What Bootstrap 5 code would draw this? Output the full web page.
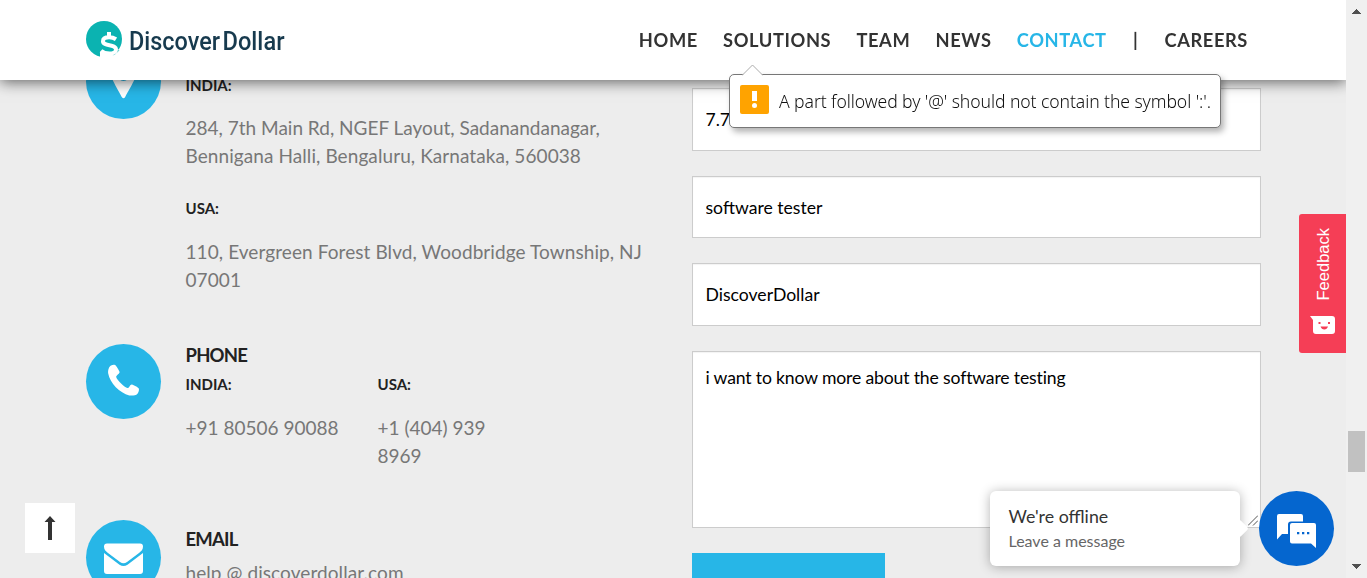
<!DOCTYPE html>
<html lang="en">
<head>
<meta charset="utf-8">
<title>Discover Dollar - Contact</title>
<meta name="viewport" content="width=device-width, initial-scale=1">
<link href="https://cdn.jsdelivr.net/npm/bootstrap@5.3.0/dist/css/bootstrap.min.css" rel="stylesheet">
<style>
body{font-family:Lato,"Liberation Sans",sans-serif;background:#ededed;color:#777;font-size:19px;line-height:28px}
.page{width:1346px}
.topbar{width:1346px;height:80px;padding:0 98px 0 86px;box-shadow:0 2px 14px rgba(0,0,0,.6);clip-path:inset(0 0 -30px 0)}
.menu{gap:25.200px}
.menu a{color:#333;font-weight:700;font-size:18.3px;letter-spacing:.6px;text-decoration:none;white-space:nowrap}
.menu a.active{color:#27b6e7}
.menu a.divider{margin:0 1px}
.contact{padding:44px 85px 0 86px}
.info{width:606px}
.info-text{margin-left:24.500px}
.disc{width:75px;height:75px;background:#27b6e7}
.info h4{color:#222;font-size:18.5px;font-weight:700;line-height:30px;letter-spacing:-.8px;margin:0}
.info h6{color:#222;font-size:15px;font-weight:700;line-height:28px;margin:0 0 15px}
.info p{margin:0}
.wide{letter-spacing:.08px}
.location{height:300px}
.phone{height:176px}
.phone h6{margin-bottom:16px}
.entry .form-control{border:1px solid #ccc;border-radius:0;box-shadow:inset 0 1px 1px rgba(0,0,0,.05);color:#000;font-size:17.6px;padding:0 12.500px;height:63px;margin-bottom:25px}
.entry input.form-control.mid{height:62px}
.entry textarea.form-control{height:177px;padding-top:12px;line-height:28px;resize:none;letter-spacing:-.15px}
.grip{right:3px;bottom:28px}
.send{width:193px;height:60px;background:#27b6e7;border-radius:0}
.bubble{left:729px;top:74px;width:492px;height:54px;border:1px solid #777;border-radius:5px;box-shadow:3px 4px 6px rgba(0,0,0,.3);z-index:1040;padding:0 10px;color:#111;font:300 17.6px "Noto Sans","Open Sans",sans-serif;letter-spacing:-.09px}
.bubble .tip{left:12px;top:-11px}
.warn{width:29px;height:29px;background:#ffa300;border-radius:2px}
.feedback{left:1299px;top:214px;width:47px;height:139px;background:#f53e56;border-radius:3px 0 0 3px;padding:14px 0 18px;color:#fff}
.feedback span{writing-mode:vertical-rl;transform:rotate(180deg);font:16.5px/20px "Liberation Sans",sans-serif}
.totop{left:25px;top:503px;width:50px;height:50px}
.offline{left:990px;top:491px;width:250px;height:75px;border-radius:6px;box-shadow:0 1px 12px rgba(0,0,0,.3);padding:11px 18.500px}
.offline:after{content:"";position:absolute;right:-6px;top:31px;width:13px;height:13px;background:#fff;transform:rotate(45deg);border-radius:2px}
.offline strong{font-weight:400;font-size:17.8px;line-height:28px;color:#333}
.offline span{font-size:16px;line-height:22px;color:#666}
.chat{left:1259px;top:491px;width:75px;height:75px;background:#0566cf}
.scroller{width:21px;background:#f0f0f0;padding:9px 0 9px;z-index:1050}
.thumb{width:17px;height:41px;background:#c1c1c1;margin-top:417px}
</style>
</head>
<body>
<div class="d-flex vh-100 overflow-hidden position-relative">
  <div class="page flex-shrink-0">
    <header class="topbar fixed-top bg-white d-flex justify-content-between align-items-center">
      <a href="#" aria-label="Discover Dollar">
        <svg class="d-block" width="205" height="44" viewBox="0 0 205 44">
          <circle cx="18" cy="21" r="18" fill="#0bb3b1"/>
          <path fill="none" stroke="#fff" stroke-width="4" d="M23 14v5M30 21.200c-2-1.300-4.300-1.900-7-1.900-3.800 0-6 1.500-6 3.900 0 5.500 13 2.600 13 8.300 0 2.500-2.500 4-6.500 4-3.500 0-6.500-1-8.500-2.700"/>
          <path fill="#fff" d="M14 33.500l4 2 8 1.500 4-2 3-4 4 1v9H14z"/>
          <path fill="#0bb3b1" d="M26.500 37.500q4.500-1.500 5.500-5l1.500-.5q-2.500 4-7 5.500z"/>
          <text x="43" y="31.500" fill="#173a4e" font-family="Roboto, sans-serif" font-size="25" font-weight="500" textLength="91" lengthAdjust="spacingAndGlyphs">Discover</text>
          <text x="136.500" y="31.500" fill="#173a4e" font-family="Roboto, sans-serif" font-size="25" font-weight="500" textLength="62" lengthAdjust="spacingAndGlyphs">Dollar</text>
        </svg>
      </a>
      <nav class="menu d-flex align-items-center">
        <a href="#">HOME</a><a href="#">SOLUTIONS</a><a href="#">TEAM</a><a href="#">NEWS</a><a href="#" class="active">CONTACT</a><a href="#" class="divider">|</a><a href="#">CAREERS</a>
      </nav>
    </header>

    <main class="contact d-flex">
      <section class="info flex-shrink-0">
        <div class="location d-flex">
          <div class="disc rounded-circle flex-shrink-0"><svg class="d-block" width="75" height="75" viewBox="0 0 75 75"><path fill="#fff" d="M37.500 16a13 13 0 0 0-13 13c0 5 9.500 20 11.300 24q1.700 2.500 3.400 0C41 49 50.500 34 50.500 29a13 13 0 0 0-13-13z"/><circle cx="37.500" cy="31" r="6" fill="#27b6e7"/></svg></div>
          <div class="info-text">
            <h4 style="margin-top:-4px">LOCATION</h4>
            <h6 style="margin-top:1px">INDIA:</h6>
            <p>284, 7th Main Rd, NGEF Layout, Sadanandanagar,<br><span class="wide">Bennigana Halli, Bengaluru, Karnataka, 560038</span></p>
            <h6 style="margin-top:24px;margin-bottom:16px">USA:</h6>
            <p class="wide">110, Evergreen Forest Blvd, Woodbridge Township, NJ<br>07001</p>
          </div>
        </div>
        <div class="phone d-flex">
          <div class="disc rounded-circle flex-shrink-0"><svg class="d-block" width="75" height="75" viewBox="0 0 75 75"><path fill="#fff" d="M25 21.500c1.500-.6 3-.9 4-.4 1.200.6 3.500 4.500 4.500 6.600.8 1.600-3.500 3.500-3.300 5.200.4 2.800 8.300 10.500 11.300 11 1.700.3 2.600-3.800 4.400-3.500 1.900.4 6.200 2.800 6.900 4.100.6 1.200-.3 4.300-1.500 5.500-1.200 1.200-5.200 2-8 1.400-9.500-2-19.500-12.500-21.100-21.800-.5-3.200.8-7.300 2.800-8.100z"/></svg></div>
          <div class="info-text">
            <h4 style="margin-top:-4px">PHONE</h4>
            <div class="d-flex">
              <div style="width:192px"><h6>INDIA:</h6><p>+91 80506 90088</p></div>
              <div><h6>USA:</h6><p>+1 (404) 939<br>8969</p></div>
            </div>
          </div>
        </div>
        <div class="d-flex">
          <div class="disc rounded-circle flex-shrink-0"><svg class="d-block" width="75" height="75" viewBox="0 0 75 75"><path fill="#fff" d="M21 23.500h33q3 0 3 3c0 3-1.500 4.500-4 6.500L41 42q-3.500 2.500-7 0L22 33c-2.500-2-4-3.500-4-6.500q0-3 3-3zM18 33l15.500 11.700q4 2.500 8 0L57 33v18q0 3-3 3H21q-3 0-3-3z"/></svg></div>
          <div class="info-text">
            <h4 style="margin-top:4px">EMAIL</h4>
            <p class="wide" style="margin-top:5px">help @ discoverdollar.com</p>
          </div>
        </div>
      </section>
      <form class="entry flex-grow-1">
        <div style="height:44px"></div>
        <input class="form-control" value="7.7">
        <input class="form-control mid" value="software tester">
        <input class="form-control" value="DiscoverDollar">
        <div class="position-relative">
          <textarea class="form-control" spellcheck="false">i want to know more about the software testing</textarea>
          <svg class="grip position-absolute" style="bottom:2px" width="10" height="11"><path d="M0 10.500L10 .5M5 10.500l5-5" stroke="#555" fill="none"/></svg>
        </div>
        <button type="button" class="btn send" aria-label="Send"></button>
      </form>
    </main>
  </div>

  <aside class="scroller d-flex flex-column align-items-center flex-shrink-0">
    <svg width="9" height="5" shape-rendering="crispEdges"><path fill="#505050" d="M0 5L4.500 0 9 5z"/></svg>
    <div class="thumb"></div>
    <svg class="mt-auto" width="9" height="5" shape-rendering="crispEdges"><path fill="#505050" d="M0 0h9L4.500 5z"/></svg>
  </aside>

  <div class="bubble position-absolute bg-white d-flex align-items-center text-nowrap">
    <svg class="tip position-absolute" width="21" height="12"><path d="M0 11.500L10.500 1 21 11.500" fill="#fff" stroke="#aaa"/></svg>
    <div class="warn flex-shrink-0" style="margin-top:-3px;margin-right:10px"><svg class="d-block" width="29" height="29"><path fill="#fff" d="M12 6h5v10h-5z"/><circle cx="14.500" cy="20.500" r="2.500" fill="#fff"/></svg></div>
    <span>A part followed by '@' should not contain the symbol ':'.</span>
  </div>

  <div class="feedback position-absolute d-flex flex-column align-items-center justify-content-between">
    <span>Feedback</span>
    <svg width="27" height="20" viewBox="0 0 27 20"><path fill="#fff" d="M1 1h22q3 0 3 3v12q0 3-3 3H7q-3 0-3-3V5z"/><path fill="#f53e56" d="M9.500 7h2v2h-2zM19 7h2v2h-2zM11.500 11.500h7.500q-1 3-3.700 3t-3.800-3z"/></svg>
  </div>

  <a href="#" class="totop position-absolute bg-white d-flex align-items-center justify-content-center" aria-label="Back to top">
    <svg width="12" height="26"><path fill="#333" d="M6 1l5.500 6H8v18H4V7H.5z"/></svg>
  </a>
  <div class="offline position-absolute bg-white d-flex flex-column"><strong>We're offline</strong><span>Leave a message</span></div>
  <div class="chat position-absolute rounded-circle">
    <svg class="d-block" width="75" height="75"><path fill="#fff" d="M20 23h22q2 0 2 2v5.500H32q-3 0-3 3V43h-6l-5 5.500V25q0-2 2-2z"/><path fill="#fff" d="M33 32h22q2 0 2 2v23l-5-4.500H33q-2 0-2-2V34q0-2 2-2z"/><path fill="#0566cf" d="M38 41h2.300v2.300H38zM43 41h2.300v2.300H43zM48 41h2.300v2.300H48z"/></svg>
  </div>
</div>
<script src="https://cdn.jsdelivr.net/npm/bootstrap@5.3.0/dist/js/bootstrap.bundle.min.js"></script>
</body>
</html>
